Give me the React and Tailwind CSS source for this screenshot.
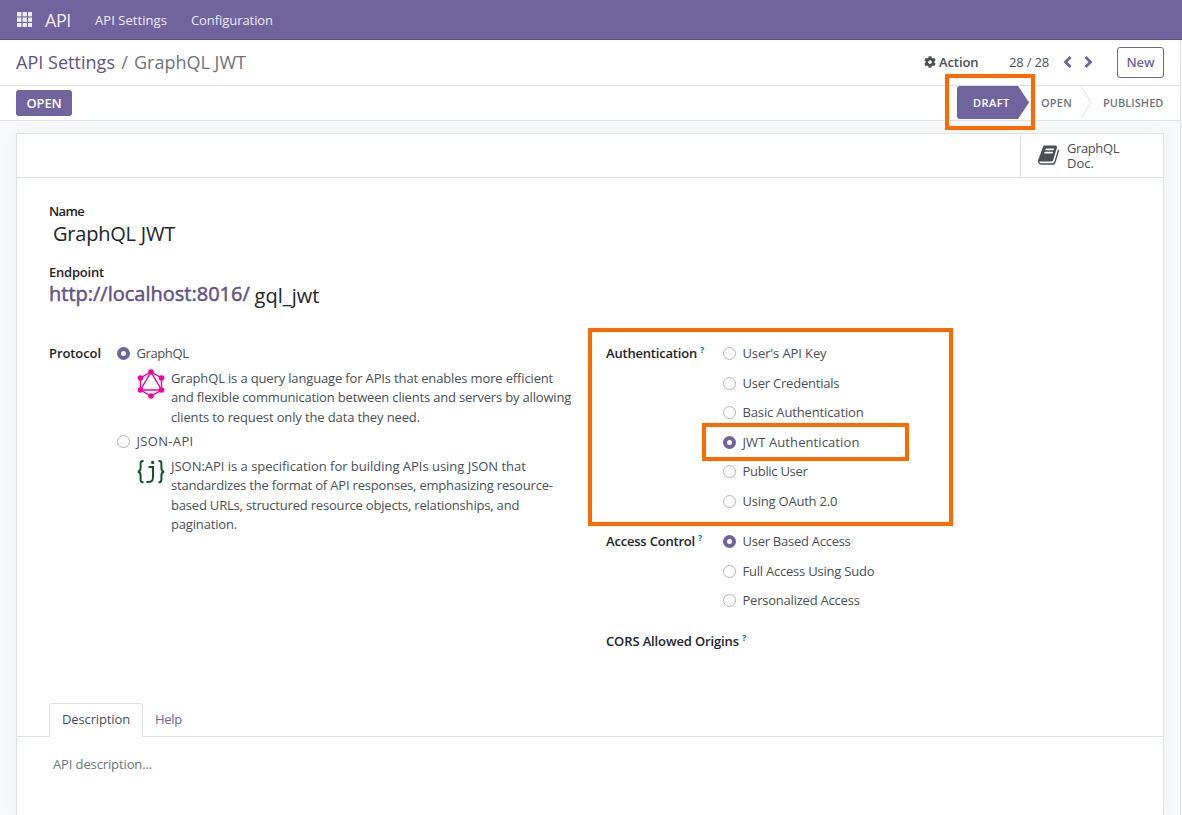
import React from "react";
import { FaCog } from "react-icons/fa";

function Radio({ on }) {
  return on ? (
    <span className="mt-px block size-[13px] shrink-0 rounded-full border-[4px] border-[#71639e] bg-white" />
  ) : (
    <span className="mt-px block size-[13px] shrink-0 rounded-full border border-[#b4b4b6] bg-white" />
  );
}

function Option({ on, label, track = "tracking-[-0.22px]" }) {
  return (
    <div className="flex h-5 items-center gap-[6.5px]">
      <Radio on={on} />
      <span className={`whitespace-nowrap ${track}`}>{label}</span>
    </div>
  );
}

function FieldLabel({ children, help, track }) {
  return (
    <div className="flex h-5 w-[117px] shrink-0 whitespace-nowrap font-semibold text-[#212529]">
      <span className={track}>{children}</span>
      {help && <sup className="top-[-3px] ml-[3px] text-[9px] font-bold leading-[20px] text-[#017e84]">?</sup>}
    </div>
  );
}

function GraphQLLogo() {
  const pts = [[14, 3], [24.5, 9], [24.5, 21], [14, 27], [3.5, 21], [3.5, 9]];
  return (
    <svg viewBox="0 0 28 30" className="block h-[30px] w-[28px]" fill="none" stroke="#f6009b" strokeWidth="1.4">
      <polygon points="14,3 24.5,9 24.5,21 14,27 3.5,21 3.5,9" />
      <polygon points="14,3 24.5,21 3.5,21" />
      {pts.map(([x, y]) => (
        <circle key={`${x}-${y}`} cx={x} cy={y} r="2.8" fill="#f6009b" stroke="none" />
      ))}
    </svg>
  );
}

function JsonApiLogo() {
  return (
    <svg viewBox="0 0 28 26" className="block h-[26px] w-[28px]" fill="none" stroke="#14532d" strokeWidth="2">
      <path d="M6.5 2H5.6C4 2 3.6 3 3.6 4.6V9C3.6 11.300 2.900 12.500 0.800 12.700C2.900 12.900 3.600 14.200 3.600 16.400V20.500C3.600 22.200 4 23.200 5.600 23.200H6.500" />
      <path d="M21.500 2H22.400C24 2 24.400 3 24.400 4.600V9C24.400 11.300 25.100 12.500 27.200 12.700C25.100 12.900 24.400 14.200 24.400 16.400V20.500C24.400 22.200 24 23.200 22.400 23.200H21.500" />
      <path d="M11.500 8H16V18.500C16 22 14.500 23.200 9.500 23" />
      <circle cx="15.600" cy="3.400" r="1.600" fill="#14532d" stroke="none" />
    </svg>
  );
}

function Chevron({ d }) {
  return (
    <svg viewBox="0 0 10 14" className="block h-[14px] w-[10px]" fill="none" stroke="#71639e" strokeWidth="2.8">
      <path d={d} />
    </svg>
  );
}

const cells = [0, 5.500, 11];

export default function App() {
  return (
    <div className="relative flex h-[815px] w-[1182px] flex-col overflow-hidden bg-[#f8f9fa] font-['Open_Sans','Noto_Sans',sans-serif] text-[13px] leading-[20px] text-[#495057]">
      <header className="flex h-10 shrink-0 items-center border-b border-[#5a4f7f] bg-[#71639e] pl-[17px] text-[#eeecf3]">
        <svg viewBox="0 0 15 15" className="mr-[13px] block size-[15px]" fill="#eeecf3">
          {cells.map((y) => cells.map((x) => <rect key={`${x}-${y}`} x={x} y={y} width="4.4" height="4.4" />))}
        </svg>
        <span className="w-[50px] text-[18px] tracking-[-0.5px]">API</span>
        <span className="w-[96px] tracking-[0.06px]">API Settings</span>
        <span className="tracking-[-0.07px]">Configuration</span>
      </header>

      <div className="flex min-h-0 flex-1">
        <div className="flex w-[1181px] flex-col border-r border-[#dee2e6]">
          <div className="flex h-[46px] shrink-0 items-center border-b border-[#dee2e6] bg-white pb-px pl-4 pr-4">
            <div className="flex flex-1 whitespace-pre text-[18px]">
              <span className="tracking-[0.03px] text-[#5f5287]">API Settings</span>
              <span className="w-[19px] text-center text-[#6c757d]">/</span>
              <span className="text-[#6c757d]">GraphQL JWT</span>
            </div>
            <FaCog className="mr-[3px] size-3" />
            <span className="w-[70px] font-semibold tracking-[-0.1px]">Action</span>
            <span className="w-[53px] tracking-[-0.18px]">28 / 28</span>
            <Chevron d="M8.500 2L3.500 7L8.500 12" />
            <span className="w-[12px]" />
            <Chevron d="M1.500 2L6.500 7L1.500 12" />
            <button className="ml-[23px] mt-px h-[31px] w-[47px] rounded-[3px] border border-[#71639e] bg-white pb-px font-semibold tracking-[-0.1px] text-[#71639e]">
              New
            </button>
          </div>

          <div className="flex h-[35px] shrink-0 items-center justify-between border-b border-[#dee2e6] bg-white pl-4 pr-4">
            <button className="h-[26px] w-[56px] rounded-[3px] bg-[#71639e] pb-px font-semibold tracking-[-0.17px] text-white">OPEN</button>
            <div className="mb-px flex h-[33px] items-center text-[11px] font-semibold text-[#6c757d]">
              <div className="relative flex h-[33px] w-[72px] items-center pl-4">
                <svg viewBox="0 0 72 33" className="absolute inset-0 h-[33px] w-[72px]" fill="#71639e">
                  <path d="M3 0H61L72 16.500L61 33H3Q0 33 0 30V3Q0 0 3 0Z" />
                </svg>
                <span className="relative tracking-[0.45px] text-white">DRAFT</span>
              </div>
              <span className="w-[51px] pl-3 tracking-[0.2px]">OPEN</span>
              <svg viewBox="0 0 12 33" className="block h-[33px] w-3" fill="none" stroke="#dee2e6">
                <path d="M1 0.500L11 16.500L1 32.500" />
              </svg>
              <span className="w-[72px] whitespace-nowrap pl-[11px] tracking-[0.05px]">PUBLISHED</span>
            </div>
          </div>

          <main className="ml-4 mr-4 mt-3 flex min-h-0 w-[1148px] flex-1 flex-col border border-b-0 border-[#dee2e6] bg-white shadow-[0_0_16px_rgba(0,0,0,0.04)]">
            <div className="flex h-11 shrink-0 justify-end border-b border-[#dee2e6]">
              <div className="flex w-[143px] items-center border-l border-[#dee2e6] pl-[17px]">
                <svg viewBox="0 0 1664 1792" className="mb-[2px] mr-[8px] block h-[24px] w-[21px]" fill="#495057">
                  <path d="M1639 478q40 57 18 129l-275 906q-19 64-76.500 107.500T1183 1664H260q-77 0-148.500-53.500T12 1479q-24-67-2-127 0-4 3-27t4-37q1-8-3-21.500t-3-19.500q2-11 8-21t16.500-23.500T52 1179q23-38 45-91.500t30-91.500q3-10 .5-30t-.5-28q3-11 17-28t17-23q21-36 42-92t25-90q1-9-2.500-32t.5-28q4-13 22-30.500t22-22.500q19-26 42.500-84.500T340 411q1-8-3-25.500t-2-26.500q2-8 9-18t18-23 17-21q8-12 16.500-30.500t15-35 16-36T446.500 163 470 139.500t36-5.500 47.500 7.500l-1 3q38-9 51-9h761q74 0 114 56t18 130l-274 906q-36 119-71.500 153.500T1023 1416H154q-27 0-38 15-11 16-1 43 24 70 144 70h923q29 0 56-15.500t35-41.500l300-987q7-22 5-57 38 15 59 43zm-1064 2q-4 13 2 22.500t20 9.500h608q13 0 25.500-9.500T1247 480l21-64q4-13-2-22.500t-20-9.500H638q-13 0-25.500 9.500T596 416zm-83 256q-4 13 2 22.500t20 9.500h608q13 0 25.500-9.500T1164 736l21-64q4-13-2-22.500t-20-9.500H555q-13 0-25.500 9.500T513 672z" />
                </svg>
                <div className="leading-[15px]">
                  <div className="tracking-[-0.4px]">GraphQL</div>
                  <div>Doc.</div>
                </div>
              </div>
            </div>

            <div className="px-8 pt-[23px]">
              <div className="font-semibold tracking-[-0.6px] text-[#212529]">Name</div>
              <div className="pl-1 pt-[1px] text-[20px] leading-[24px] tracking-[-0.22px] text-[#212529]">GraphQL JWT</div>
              <div className="mt-[16px] font-semibold tracking-[-0.21px] text-[#212529]">Endpoint</div>
              <div className="flex h-[28px] text-[20px]">
                <span className="w-[205.500px] whitespace-nowrap leading-[24px] text-[#5f5287] [-webkit-text-stroke:0.5px_#5f5287]">http://localhost:8016/</span>
                <span className="pt-[2px] leading-[24px] tracking-[0.06px] text-[#212529]">gql_jwt</span>
              </div>
            </div>

            <div className="flex px-8 pt-[33px]">
              <section className="flex w-[557px]">
                <div className="w-[68px] shrink-0 font-semibold tracking-[-0.08px] text-[#212529]">Protocol</div>
                <div>
                  <Option on label="GraphQL" track="tracking-[-0.4px]" />
                  <div className="flex h-[68px] pl-5 pt-[5.500px]">
                    <div className="w-[34px]"><GraphQLLogo /></div>
                    <div className="whitespace-nowrap leading-[19.5px]">
                      <div className="tracking-[-0.15px]">GraphQL is a query language for APIs that enables more efficient</div>
                      <div className="tracking-[-0.17px]">and flexible communication between clients and servers by allowing</div>
                      <div className="tracking-[-0.13px]">clients to request only the data they need.</div>
                    </div>
                  </div>
                  <Option label="JSON-API" track="tracking-[0.33px]" />
                  <div className="flex pl-5 pt-[5.500px]">
                    <div className="w-[34px] pt-[2.500px]"><JsonApiLogo /></div>
                    <div className="whitespace-nowrap leading-[19.5px]">
                      <div className="tracking-[-0.02px]">JSON:API is a specification for building APIs using JSON that</div>
                      <div className="tracking-[-0.19px]">standardizes the format of API responses, emphasizing resource-</div>
                      <div className="tracking-[-0.19px]">based URLs, structured resource objects, relationships, and</div>
                      <div className="tracking-[-0.17px]">pagination.</div>
                    </div>
                  </div>
                </div>
              </section>

              <section>
                <div className="flex">
                  <FieldLabel help track="tracking-[-0.19px]">Authentication</FieldLabel>
                  <div className="flex flex-col gap-[9.600px]">
                    <Option label="User's API Key" track="tracking-[-0.11px]" />
                    <Option label="User Credentials" />
                    <Option label="Basic Authentication" track="tracking-[-0.14px]" />
                    <Option on label="JWT Authentication" track="tracking-[0.1px]" />
                    <Option label="Public User" track="tracking-[-0.29px]" />
                    <Option label="Using OAuth 2.0" />
                  </div>
                </div>
                <div className="mt-[20px] flex">
                  <FieldLabel help track="tracking-[-0.2px]">Access Control</FieldLabel>
                  <div className="flex flex-col gap-[9.600px]">
                    <Option on label="User Based Access" track="tracking-[-0.26px]" />
                    <Option label="Full Access Using Sudo" />
                    <Option label="Personalized Access" />
                  </div>
                </div>
                <div className="mt-[21px] flex">
                  <FieldLabel help track="tracking-[-0.13px]">CORS Allowed Origins</FieldLabel>
                </div>
              </section>
            </div>

            <div className="mt-[51px] flex h-[35px] shrink-0 items-start border-b border-[#dee2e6] pl-8 pt-px">
              <div className="h-[34px] w-[94px] rounded-t-[3px] border border-b-0 border-[#dee2e6] bg-white pl-3 pt-[5px] tracking-[-0.13px] shadow-[0_1px_0_white]">
                Description
              </div>
              <div className="pl-3 pt-[6px] tracking-[-0.28px] text-[#71639e]">Help</div>
            </div>
            <div className="pl-9 pt-[17px] tracking-[-0.12px] text-[#6c757d]">API description...</div>
          </main>
        </div>
      </div>

      <div className="absolute left-[945px] top-[74px] h-[56px] w-[90px] border-[4px] border-[#ff6a00]" />
      <div className="absolute left-[588px] top-[328px] h-[198px] w-[365px] border-[4px] border-[#ff6a00]" />
      <div className="absolute left-[702px] top-[423px] h-[38px] w-[207px] border-[4px] border-[#ff6a00]" />
    </div>
  );
}
